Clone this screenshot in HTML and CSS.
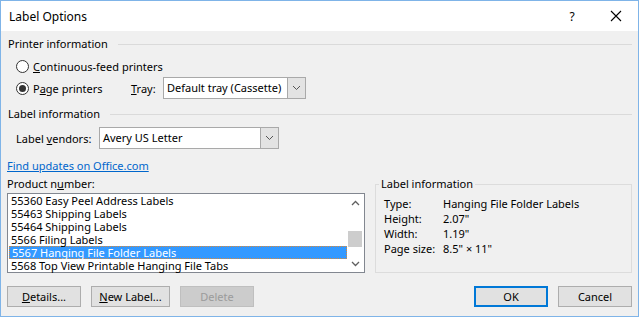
FILE: index.html
```html
<!DOCTYPE html>
<html lang="en">
<head>
  <meta charset="UTF-8">
  <title>Label Options</title>
  <link rel="stylesheet" href="styles.css">
</head>
<body>
  <div class="dialog">
    <div class="titlebar">
      <span class="title">Label Options</span>
      <span class="help">?</span>
      <span class="close">
        <svg width="12" height="12" viewBox="0 0 12 12"><path d="M1 1 L11 11 M11 1 L1 11" stroke="#000" stroke-width="1.1" fill="none"/></svg>
      </span>
    </div>

    <div class="content">
      <div class="section-head"><span>Printer information</span></div>

      <div class="radio-row">
        <span class="radio"></span>
        <span><u>C</u>ontinuous-feed printers</span>
      </div>
      <div class="radio-row">
        <span class="radio checked"></span>
        <span class="page-label">P<u>a</u>ge printers</span>
        <span class="tray-label"><u>T</u>ray:</span>
        <div class="combo tray-combo">
          <span class="combo-text">Default tray (Cassette)</span>
          <span class="combo-btn"><svg width="9" height="6" viewBox="0 0 9 6"><path d="M1 1 L4.5 4.5 L8 1" stroke="#555" stroke-width="1" fill="none"/></svg></span>
        </div>
      </div>

      <div class="section-head"><span>Label information</span></div>

      <div class="vendor-row">
        <span class="vendor-label">Label <u>v</u>endors:</span>
        <div class="combo vendor-combo">
          <span class="combo-text">Avery US Letter</span>
          <span class="combo-btn"><svg width="9" height="6" viewBox="0 0 9 6"><path d="M1 1 L4.5 4.5 L8 1" stroke="#555" stroke-width="1" fill="none"/></svg></span>
        </div>
      </div>

      <a class="link" href="#">Find updates on Office.com</a>

      <div class="lower">
        <div class="product">
          <div class="product-label">Product n<u>u</u>mber:</div>
          <div class="listbox">
            <div class="items">
              <div class="item">55360 Easy Peel Address Labels</div>
              <div class="item">55463 Shipping Labels</div>
              <div class="item">55464 Shipping Labels</div>
              <div class="item">5566 Filing Labels</div>
              <div class="item selected">5567 Hanging File Folder Labels</div>
              <div class="item">5568 Top View Printable Hanging File Tabs</div>
            </div>
            <div class="scrollbar">
              <span class="arrow"><svg width="9" height="6" viewBox="0 0 9 6"><path d="M1 5 L4.5 1.5 L8 5" stroke="#606060" stroke-width="1.3" fill="none"/></svg></span>
              <div class="track"><div class="thumb"></div></div>
              <span class="arrow"><svg width="9" height="6" viewBox="0 0 9 6"><path d="M1 1 L4.5 4.5 L8 1" stroke="#606060" stroke-width="1.3" fill="none"/></svg></span>
            </div>
          </div>
        </div>

        <fieldset class="info">
          <legend>Label information</legend>
          <div class="info-row"><span class="key">Type:</span><span>Hanging File Folder Labels</span></div>
          <div class="info-row"><span class="key">Height:</span><span>2.07"</span></div>
          <div class="info-row"><span class="key">Width:</span><span>1.19"</span></div>
          <div class="info-row"><span class="key">Page size:</span><span>8.5" &times; 11"</span></div>
        </fieldset>
      </div>

      <div class="buttons">
        <button class="btn"><u>D</u>etails...</button>
        <button class="btn"><u>N</u>ew Label...</button>
        <button class="btn" disabled>Delete</button>
        <span class="spacer"></span>
        <button class="btn default">OK</button>
        <button class="btn">Cancel</button>
      </div>
    </div>
  </div>
</body>
</html>
```

FILE: styles.css
```css
* {
  box-sizing: border-box;
}

body {
  margin: 0;
  font-family: "Noto Sans", "Open Sans", sans-serif;
  font-size: 11px;
  color: #000;
}

u {
  text-decoration: underline;
  text-underline-offset: 1px;
}

.dialog {
  width: 639px;
  height: 317px;
  border: 1px solid #7fb4e8;
  background: #f0f0f0;
  display: flex;
  flex-direction: column;
}

.titlebar {
  height: 30px;
  background: #fff;
  display: flex;
  align-items: center;
  padding-left: 8px;
  font-size: 12px;
}

.title {
  flex: 1;
}

.help {
  width: 20px;
  text-align: center;
  margin-right: 24px;
  font-size: 12px;
}

.close {
  width: 20px;
  display: flex;
  justify-content: center;
  margin-right: 12px;
}

.content {
  flex: 1;
  padding: 5px 6px 0 6px;
  display: flex;
  flex-direction: column;
}

.section-head {
  display: flex;
  align-items: center;
  line-height: 16px;
  height: 16px;
  padding-left: 1px;
}

.section-head::after {
  content: "";
  flex: 1;
  height: 1px;
  background: #dadada;
  margin-left: 10px;
}

.radio-row {
  display: flex;
  align-items: center;
  height: 22px;
  padding-left: 9px;
}

.radio-row:first-of-type {
  margin-top: 3px;
}

.radio {
  width: 13px;
  height: 13px;
  border: 1px solid #333;
  border-radius: 50%;
  background: #fff;
  margin-right: 4px;
  display: flex;
  align-items: center;
  justify-content: center;
}

.radio.checked::after {
  content: "";
  width: 7px;
  height: 7px;
  border-radius: 50%;
  background: #333;
}

.page-label {
  width: 98px;
}

.tray-label {
  width: 32px;
}

.section-head + .radio-row {
  margin-top: 3px;
}

.radio-row + .section-head {
  margin-top: 7px;
}

.combo {
  height: 22px;
  border: 1px solid #a9a9a9;
  background: #fff;
  display: flex;
  align-items: stretch;
}

.combo-text {
  flex: 1;
  padding-left: 3px;
  line-height: 20px;
}

.combo-btn {
  width: 18px;
  background: #e3e3e3;
  border-left: 1px solid #a9a9a9;
  display: flex;
  align-items: center;
  justify-content: center;
}

.tray-combo {
  width: 143px;
}

.vendor-row {
  display: flex;
  align-items: center;
  margin-top: 5px;
  padding-left: 9px;
}

.vendor-label {
  width: 83px;
}

.vendor-combo {
  width: 180px;
}

.link {
  color: #0066cc;
  line-height: 16px;
  margin-top: 9px;
  align-self: flex-start;
}

.lower {
  display: flex;
  gap: 10px;
  margin-top: 2px;
}

.product {
  width: 358px;
}

.product-label {
  line-height: 16px;
  height: 17px;
}

.listbox {
  height: 80px;
  border: 1px solid #828790;
  background: #fff;
  display: flex;
}

.items {
  flex: 1;
  padding-top: 0;
}

.item {
  height: 13px;
  line-height: 13px;
  padding-left: 3px;
  white-space: nowrap;
}

.item.selected {
  background: #3399ff;
  color: #fff;
  border: 1px dotted #d9893a;
  margin-left: 1px;
  padding-left: 2px;
  line-height: 11px;
}

.scrollbar {
  width: 17px;
  display: flex;
  flex-direction: column;
}

.arrow {
  height: 17px;
  display: flex;
  align-items: center;
  justify-content: center;
}

.track {
  flex: 1;
  padding: 20px 2px 8px 1px;
}

.thumb {
  height: 16px;
  background: #cdcdcd;
}

.info {
  flex: 1;
  margin: 0;
  border: 1px solid #dcdcdc;
  padding: 4px 5px 0 3px;
  min-width: 0;
}

.info legend {
  padding: 0 2px;
  line-height: 16px;
}

.info-row {
  display: flex;
  line-height: 15px;
  padding-left: 5px;
}

.key {
  width: 59px;
}

.buttons {
  display: flex;
  margin-top: 13px;
  gap: 10px;
}

.spacer {
  flex: 1;
}

.btn {
  width: 74px;
  height: 21px;
  font-family: inherit;
  font-size: 11px;
  background: #e1e1e1;
  border: 1px solid #adadad;
  color: #000;
  padding: 0;
}

.btn:nth-child(2) {
  width: 79px;
}

.btn:disabled {
  background: #cccccc;
  border-color: #bfbfbf;
  color: #9b9b9b;
}

.btn.default {
  border: 2px solid #0078d7;
}
```
